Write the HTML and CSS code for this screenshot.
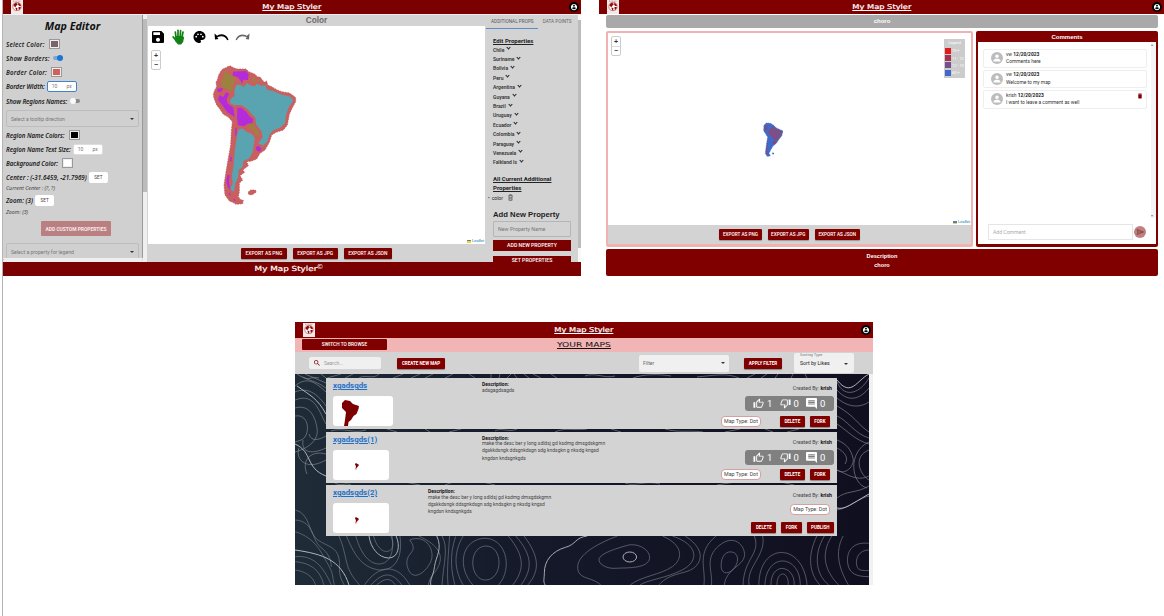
FILE: index.html
```
<!DOCTYPE html>
<html lang="en">
<head>
<meta charset="utf-8">
<title>My Map Styler</title>
<link rel="stylesheet" href="styles.css">
</head>
<body>
<svg class="defs" width="0" height="0">
  <symbol id="account" viewBox="0 0 24 24"><circle cx="12" cy="12" r="12" fill="#000"/><path fill="#fff" transform="translate(3 3) scale(.75)" d="M12 2C6.480 2 2 6.480 2 12s4.480 10 10 10 10-4.480 10-10S17.520 2 12 2zm0 3c1.660 0 3 1.340 3 3s-1.340 3-3 3-3-1.340-3-3 1.340-3 3-3zm0 14.200c-2.500 0-4.710-1.280-6-3.220.030-1.990 4-3.080 6-3.080 1.990 0 5.970 1.090 6 3.080-1.290 1.940-3.500 3.220-6 3.220z"/></symbol>
  <symbol id="logo" viewBox="0 0 12 14"><rect width="12" height="14" fill="#f3e9e9"/><path d="M2 1.200h8" stroke="#b77" stroke-width=".8" stroke-dasharray="1 .6"/><circle cx="6" cy="6.500" r="4.100" fill="#fff" stroke="#a33" stroke-width=".6"/><path fill="#8c0a0a" d="M2.300 5l2-2 2 .2.300 1.500-1.400 1-.4 1.200-1.500-.5zM4.300 7.500l2 .5.200 1.300-1.200 1.200zM7.200 2.700l2 1.200.8 2-1.600.2-1.200-1zM7.400 7.100l2.400-.2-.6 2.200-1.400.8z"/></symbol>
  <symbol id="save" viewBox="3 3 18 18"><path d="M17 3H5c-1.110 0-2 .9-2 2v14c0 1.100.890 2 2 2h14c1.100 0 2-.9 2-2V7l-4-4zm-5 16c-1.660 0-3-1.340-3-3s1.340-3 3-3 3 1.340 3 3-1.340 3-3 3zm3-10H5V5h10v4z"/></symbol>
  <symbol id="palette" viewBox="2 2 20 20"><path d="M12 2C6.490 2 2 6.490 2 12s4.490 10 10 10c1.380 0 2.500-1.120 2.500-2.500 0-.61-.23-1.200-.64-1.670-.08-.1-.13-.21-.13-.33 0-.28.220-.5.500-.5H16c3.310 0 6-2.690 6-6 0-4.960-4.490-9-10-9zm5.500 11c-.83 0-1.500-.67-1.500-1.500s.670-1.500 1.500-1.500 1.500.670 1.500 1.500-.67 1.500-1.500 1.500zm-3-4c-.83 0-1.500-.67-1.500-1.500S13.670 6 14.500 6s1.500.670 1.500 1.500S15.330 9 14.500 9zM5 11.500c0-.83.670-1.500 1.500-1.500s1.500.670 1.500 1.500S7.330 13 6.500 13 5 12.330 5 11.500zm6-4c0 .83-.67 1.500-1.500 1.500S8 8.330 8 7.500 8.670 6 9.500 6s1.500.670 1.500 1.500z"/></symbol>
  <symbol id="undo" viewBox="1 7 23 10"><path d="M12.500 8c-2.650 0-5.050.990-6.900 2.600L2 7v9h9l-3.620-3.620c1.390-1.160 3.160-1.880 5.120-1.880 3.540 0 6.550 2.310 7.600 5.500l2.370-.78C21.080 11.030 17.150 8 12.500 8z"/></symbol>
  <symbol id="up" viewBox="0 0 24 24"><path d="M9 21h9c.83 0 1.540-.5 1.840-1.220l3.020-7.050c.090-.23.140-.47.140-.73v-2c0-1.100-.9-2-2-2h-6.310l.95-4.570.03-.32c0-.41-.17-.79-.44-1.060L14.170 1 7.580 7.590C7.220 7.950 7 8.450 7 9v10c0 1.100.9 2 2 2zM9 9l4.340-4.340L12 10h9v2l-3 7H9V9zM1 9h4v12H1z"/></symbol>
  <symbol id="comment" viewBox="2 2 20 20"><path d="M22 4c0-1.100-.9-2-2-2H4c-1.100 0-2 .9-2 2v12c0 1.100.900 2 2 2h14l4 4V4zM18 14H6v-2h12v2zm0-3H6V9h12v2zm0-3H6V6h12v2z"/></symbol>
  <symbol id="search" viewBox="3 3 18 18"><path d="M15.500 14h-.79l-.28-.27C15.410 12.590 16 11.110 16 9.500 16 5.910 13.090 3 9.500 3S3 5.910 3 9.500 5.910 16 9.500 16c1.610 0 3.090-.59 4.230-1.570l.27.280v.79l5 4.990L20.490 19l-4.990-5zm-6 0C7.010 14 5 11.990 5 9.500S7.010 5 9.500 5 14 7.010 14 9.500 11.990 14 9.500 14z"/></symbol>
  <symbol id="bin" viewBox="5 3 14 18"><path d="M6 19c0 1.100.9 2 2 2h8c1.100 0 2-.9 2-2V7H6v12zM19 4h-3.500l-1-1h-5l-1 1H5v2h14V4z"/></symbol>
  <symbol id="binline" viewBox="4 2 16 20"><path d="M5 6h14M9 5V3h6v2M7 7v14h10V7M10 10v8M14 10v8" fill="none" stroke="#333" stroke-width="1.800"/></symbol>
  <symbol id="person" viewBox="0 0 24 24"><circle cx="12" cy="12" r="12" fill="#bdbdbd"/><path fill="#fff" d="M12 12c1.930 0 3.500-1.570 3.500-3.500S13.930 5 12 5 8.500 6.570 8.500 8.500 10.070 12 12 12zm0 1.700c-2.400 0-7 1.200-7 3.500V19h14v-1.800c0-2.300-4.600-3.500-7-3.500z"/></symbol>
  <symbol id="america" viewBox="38 30 255 425"><path d="M62 50 78 38 92 33 105 40 138 42 146 50 165 58 180 66 193 82 203 90 245 110 268 114 285 125 288 140 266 180 262 210 250 225 228 232 215 240 208 262 195 285 180 295 165 312 140 320 145 332 128 345 120 362 128 375 118 385 115 410 117 430 130 440 108 448 88 438 75 420 72 390 78 350 92 270 97 200 70 175 42 130 40 112 50 95 52 75Z"/></symbol>
</svg>

<main class="canvas">
  <div class="rule"></div>

  <section class="win editor">
    <header class="bar"><svg class="logo"><use href="#logo"/></svg><a class="brand">My Map Styler</a><svg class="acct"><use href="#account"/></svg></header>
    <div class="ed-body">
      <div class="side-wrap">
        <aside class="side">
          <h1>Map Editor</h1>
          <div class="r h14"><b class="s1">Select Color:</b><i class="sw" style="background:#7a6468"></i></div>
          <div class="r h14"><b class="s1">Show Borders:</b><i class="tog on"></i></div>
          <div class="r h14"><b class="s1">Border Color:</b><i class="sw" style="background:#d0605f"></i></div>
          <div class="r h14"><b>Border Width:</b><span class="num focus"><em>10</em><em>px</em></span></div>
          <div class="r h16"><b>Show Regions Names:</b><i class="tog"></i></div>
          <div class="select"><span>Select a tooltip direction</span><i class="caret"></i></div>
          <div class="r h14"><b>Region Name Colors:</b><i class="sw" style="background:#000"></i></div>
          <div class="r h14"><b>Region Name Text Size:</b><span class="num"><em>10</em><em>px</em></span></div>
          <div class="r h14"><b>Background Color:</b><i class="sw" style="background:#fff"></i></div>
          <div class="r h14"><b class="wide">Center : (-31.6459, -21.7969)</b><span class="set">SET</span></div>
          <div class="r h8"><span>Current Center : (?, ?)</span></div>
          <div class="r h16"><b class="wide">Zoom: (3)</b><span class="set">SET</span></div>
          <div class="r h8"><span>Zoom: (3)</span></div>
          <div class="custom">ADD CUSTOM PROPERTIES</div>
          <div class="select cut"><span>Select a property for legend</span><i class="caret"></i></div>
        </aside>
        <div class="hscroll"><span>‹</span><span>›</span></div>
      </div>
      <div class="vscroll"><i></i></div>
      <div class="mid">
        <div class="maptitle">Color</div>
        <div class="mapbox">
          <div class="tools">
            <svg width="12" height="12"><use href="#save"/></svg>
            <svg width="14" height="16" viewBox="0 0 14 16"><g stroke="#128012" stroke-linecap="round" fill="none" stroke-width="1.700"><path d="M4 8 3.300 3M6 7V1.300M8.200 7l.4-5.500M10 8l1-5"/><path d="M1.300 8 4.500 12" stroke-width="1.900"/></g><path fill="#128012" d="M3.200 7h7.700l1.200 1.500-1 4.500-2 2.600H6L3 12z"/></svg>
            <svg width="13" height="12"><use href="#palette"/></svg>
            <svg width="15" height="10" viewBox="0 0 15 10"><path d="M.5 1.500 1 7.500 6.500 6.800ZM3 5.500C7 1.500 12 3 13.800 8" fill="#000"/><path d="M2.500 5C7 1.500 12 3 13.800 8" fill="none" stroke="#000" stroke-width="1.500"/><path d="M3.500 5.500C7 3 11.500 4 13 8L9 9.500 5 8Z" fill="#fff"/></svg>
            <svg class="redo" width="15" height="10" viewBox="0 0 15 10"><path d="M.5 1.500 1 7.500 6.500 6.800ZM3 5.500C7 1.500 12 3 13.800 8"/><path d="M2.500 5C7 1.500 12 3 13.800 8" fill="none" stroke="#000" stroke-width="1.300"/><path d="M3.500 5.500C7 3 11.500 4 13 8L9 9.500 5 8Z" fill="#fff"/></svg>
          </div>
          <div class="zoomctl"><span>+</span><span>−</span></div>
          <svg class="samap" width="110" height="160" viewBox="0 0 330 480">
            <path fill="#c9605f" stroke="#b94e55" stroke-width="2" stroke-dasharray="5 3" d="M62 50 68 42 78 38 85 34 92 33 98 37 105 40 112 42 138 42 146 50 158 55 165 58 173 66 180 66 187 75 193 82 200 78 203 90 215 95 230 104 245 110 268 114 280 122 287 128 287 140 277 158 268 178 262 210 250 225 228 232 215 240 208 262 195 285 180 295 170 312 155 318 140 320 145 332 128 345 134 352 120 362 128 375 118 385 118 410 115 425 122 434 130 436 128 446 108 448 98 442 88 438 75 420 72 390 78 350 85 310 92 270 94 230 97 200 85 186 70 178 60 163 50 150 42 130 40 118 44 106 50 95 48 82 52 75 56 60Z"/>
            <path fill="#9d823f" d="M70 52 82 46 80 57 92 60 106 68 103 84 98 95 96 110 82 103 74 98 62 95 65 80 70 70Z"/>
            <path fill="#b42bdc" d="M99 50 138 48 146 58 144 75 130 74 126 86 120 75 112 66 98 62ZM52 101 70 99 64 110 53 111ZM58 120 70 126 78 112 88 116 80 132 82 145 100 158 104 186 82 172 68 152 54 134ZM112 158 125 158 140 172 148 184 159 192 158 205 143 206 132 214 114 211 111 190ZM168 276 176 272 184 282 180 290 169 286ZM106 218h4v18l-5 10ZM91 305h4v14h-5ZM82 360h7l-2 20 4 25-8-10-4-15ZM88 412l5 12-7-6ZM102 430l6 9-8-4Z"/>
            <path fill="#9d823f" d="M155 70 164 67 166 82 157 79ZM172 77l10-4-5 10ZM146 208 160 205 166 220 178 230 176 243 166 240 160 226 148 220Z"/>
            <path fill="#5aa4b2" d="M90 136 98 126 104 124 103 108 109 90 122 89 130 97 142 84 150 91 165 94 170 86 185 92 196 91 202 104 222 109 244 119 268 124 280 135 265 160 258 180 255 205 240 218 220 226 208 240 203 258 190 272 175 265 188 246 184 228 168 208 166 188 150 172 138 158 122 150 105 151 92 146ZM114 226 126 220 140 230 155 237 165 250 162 265 158 292 148 310 130 318 128 335 116 345 115 365 106 385 102 410 94 406 91 398 98 388 96 360 101 330 104 290 110 250Z"/>
            <path fill="#c9605f" stroke="#b94e55" stroke-width="2" stroke-dasharray="5 3" d="M144 412 152 405 166 405 169 411 157 419 147 419Z"/>
          </svg>
          <div class="leaflet"><i></i>Leaflet</div>
        </div>
        <div class="exports"><span>EXPORT AS PNG</span><span>EXPORT AS JPG</span><span>EXPORT AS JSON</span></div>
      </div>
      <div class="props">
        <div class="tabs"><span class="act">ADDITIONAL PROPS</span><span>DATA POINTS</span></div>
        <h2>Edit Properties</h2>
        <ul class="countries">
          <li>Chile<i></i></li><li>Suriname<i></i></li><li>Bolivia<i></i></li><li>Peru<i></i></li><li>Argentina<i></i></li><li>Guyana<i></i></li><li>Brazil<i></i></li><li>Uruguay<i></i></li><li>Ecuador<i></i></li><li>Colombia<i></i></li><li>Paraguay<i></i></li><li>Venezuela<i></i></li><li>Falkland Is<i></i></li>
        </ul>
        <h2 class="all">All Current Additional Properties</h2>
        <div class="colorrow"><span>•</span>color<svg width="5" height="7"><use href="#binline"/></svg></div>
        <h3>Add New Property</h3>
        <div class="field">New Property Name</div>
        <div class="pbtn">ADD NEW PROPERTY</div>
        <div class="pbtn last">SET PROPERTIES</div>
      </div>
      <div class="pscroll"></div>
    </div>
    <footer><span>My Map Styler</span><sup>©</sup></footer>
  </section>

  <section class="win viewer">
    <header class="bar"><svg class="logo"><use href="#logo"/></svg><a class="brand">My Map Styler</a><svg class="acct"><use href="#account"/></svg></header>
    <div class="v-body">
      <div class="v-title">choro</div>
      <div class="v-row">
        <div class="v-map">
          <div class="v-canvas">
            <div class="zoomctl"><span>+</span><span>−</span></div>
            <svg class="smallmap" width="20" height="36" viewBox="0 0 60 108"><path fill="#4169c8" stroke="#3d62bd" stroke-width="2" stroke-dasharray="3 2" d="M3 10 10 3 22 4 32 10 40 18 60 27 56 42 48 52 40 64 30 72 24 82 18 94 22 102 12 103 7 94 10 70 14 45 2 26Z"/><path fill="#7c4f86" d="M20 22 30 12 40 20 58 28 54 42 45 52 36 60 27 44 14 32ZM5 13l8-2 2 10-8 6ZM12 72l3-20v26Z"/><path fill="#7c4f86" d="m9 80 5 2-1 16-4-4Z"/><path fill="#d22" d="M32 59l6 2-3 5-4-3Z"/><path fill="#4169c8" d="M27 92h6v5h-5Z"/></svg>
            <div class="legend"><p>Legend</p><div><i style="background:#e01b1b"></i>10 +</div><div><i style="background:#a8304f"></i>11 - 12</div><div><i style="background:#764f8c"></i>12 - 13</div><div><i style="background:#4268c8"></i>60 +</div></div>
            <div class="leaflet"><i></i>Leaflet</div>
          </div>
          <div class="exports"><span>EXPORT AS PNG</span><span>EXPORT AS JPG</span><span>EXPORT AS JSON</span></div>
        </div>
        <div class="comments">
          <h4>Comments</h4>
          <div class="c-in">
            <div class="c-main">
              <div class="c"><svg width="12" height="12"><use href="#person"/></svg><p>vw <b>12/20/2023</b><br>Comments here</p></div>
              <div class="c"><svg width="12" height="12"><use href="#person"/></svg><p>vw <b>12/20/2023</b><br>Welcome to my map</p></div>
              <div class="c"><svg width="12" height="12"><use href="#person"/></svg><p>krish <b>12/20/2023</b><br>I want to leave a comment as well</p><svg class="del" width="4" height="6"><use href="#bin"/></svg></div>
            </div>
            <div class="c-scroll"><span>▴</span><span>▾</span></div>
            <div class="add"><span>Add Comment</span><svg width="12" height="12" viewBox="0 0 24 24"><circle cx="12" cy="12" r="12" fill="#c08080"/><path fill="none" stroke="#86464a" stroke-width="1.800" d="M6 7 19 12 6 17 8 12ZM8 12h10"/></svg></div>
          </div>
        </div>
      </div>
      <div class="v-desc">Description<br>choro</div>
    </div>
  </section>

  <section class="win browse">
    <header class="bar"><svg class="logo"><use href="#logo"/></svg><a class="brand">My Map Styler</a><svg class="acct"><use href="#account"/></svg></header>
    <div class="pink"><span class="switch">SWITCH TO BROWSE</span><span class="yours">YOUR MAPS</span></div>
    <div class="filters">
      <div class="search"><svg width="6" height="6"><use href="#search"/></svg>Search...</div>
      <div class="rbtn create">CREATE NEW MAP</div>
      <div class="filter">Filter<i class="caret"></i></div>
      <div class="rbtn apply">APPLY FILTER</div>
      <div class="sort"><small>Sorting Type</small><span>Sort by Likes</span><i class="caret"></i></div>
    </div>
    <div class="topo">
      <svg class="lines" width="574" height="211" viewBox="0 0 574 211">
        <defs><linearGradient id="night"><stop offset="0" stop-color="#1f2c38"/><stop offset=".4" stop-color="#151929"/><stop offset="1" stop-color="#100f20"/></linearGradient></defs>
        <rect width="574" height="211" fill="url(#night)"/>
        <g fill="none" stroke="#8d929b" stroke-width=".6">
          <path d="M0 12C12 2 20 8 31 18M0 18c14-6 24 4 31 14M0 26c20-8 24 12 31 24M0 34c14-4 20 8 22 20s-8 20-22 24M0 42c10-2 14 8 12 16s-6 8-12 10M2 0c8 6 18 6 29 14M10 0l21 9M26 0l5 4M4 74c-4 10 6 24 27 12M8 66c-2 14 10 14 23 8M14 60c2 8 10 6 17 2M12 100c-6-14 4-24 19-20"/>
          <path d="M8 3c6 4 8-1 16 1M32 4l14-4M50 4l8-4M64 4c6-4 14 2 20-4M98 4l10-4M116 4l9-4M130 4l8-4M150 4l8-4M180 4l-6-4M196 4V0M204 4l1-4M212 4l4-4M222 4l-3-4M234 4l-5-4M246 4l-8-4M262 4l-6-4M290 2c10-4 20 3 30 0M338 4c10-4 26-4 38-2M402 3c20-2 30-4 42 1M452 4l8-4M466 4l6-4M480 4l3-4M496 4l2-4M512 4l-2-4"/>
          <path d="M36 57c12-4 22 3 35-1M92 55l10 3M130 55l5 3M154 58l12-3M200 57c6-4 14 2 22-2M260 58c10-5 20-1 32-3M316 55l10 3M370 55c14 4 24 1 38 3M430 58l15-3M470 55l8 3M492 58l12-3M40 109c6 4 10-1 16 2M110 108l15 3M150 111l8-3M188 108l12 3M330 109c10 4 20-3 35 1M422 111l18-3M486 108l13 3"/>
          <path d="M542 8c8 18 24 10 32-4M542 16c12 14 24 8 32-2M542 24c14 12 26 8 32 4M542 32c18 10 20 18 32 26M542 42c10 4 18 18 32 22M542 50c12 8 18 16 32 20M542 66c10 4 14 10 16 18s-8 18-16 12M542 74c8 4 12 10 8 16M574 76c-16 6-10 24 0 30M574 68c-22 10-18 42-2 46M574 102c-12 6-22-2-32-6M574 112c-14 8-22 4-32 12M574 122c-10 2-20 12-32 14"/>
        </g>
        <g transform="translate(-5 56) scale(.3763 .3333)" fill="none" stroke="#7d838f" stroke-width="1.700">
          <path d="M14 240c40 10 34 70 60 90s50 20 56 55-6 40 14 80M14 270c50 4 44 60 66 80s28 35 30 60M14 305c56 20 70 66 86 96s12 40 18 64M14 380c50-5 74 30 96 85M14 395c40 4 66 24 76 70M14 420c24 4 46 16 54 45"/>
          <path d="M150 318c18 48 38 96 88 102 44 2 62-42 54-102M175 318c10 42 30 82 60 84 34 0 42-42 36-84M130 318c26 68 10 92 55 147M215 465c30-36 54-44 82 0M198 465c36-60 86-68 120 0M230 465c24-22 36-22 50 0"/>
          <path stroke-width="2.600" stroke="#b3b6bc" d="M210 318c4 36 26 66 52 66s32-36 20-66"/>
          <path d="M222 318c6 28 22 50 38 46s16-26 8-46"/>
          <path d="M318 330c44-20 72 34 54 70s-50 54-60 10 34-40 6-80M342 318c54 28 70 60 48 100-8 14-20 24-22 47M404 318c18 38 4 78 0 147M424 318c-2 44-8 104-4 147M440 320c-18 58-10 108-2 145M460 318c-28 54-22 104 0 147M600 318c46 60 44 100 14 147M580 318c44 60 44 100 12 147M622 318c42 64 42 104 10 147M520 348c48 0 46 98 2 102s-52-98-2-102ZM512 325c62-6 82 90 42 140M512 325c-60 10-66 90-26 140"/>
          <path stroke-width="2.600" stroke="#b3b6bc" d="M790 318c-32 4-30 26-58 34-36 12-56 40-56 76 0 18-4 25 2 37M390 318c16 38-2 60-6 92s-12 34-10 55"/>
          <path d="M900 345c38-6 66 28 52 50s-66 18-88 20-48-14-42-30 46-30 78-40ZM870 318c-60 26-116 62-104 106 8 24 38 18 60 41M990 318c54 26 56 68 26 92s-86 30-112 55M1016 318c70 26 72 76 26 102s-88 28-112 45M1050 318c64 46 42 96 0 108s-54 20-70 39"/>
          <ellipse cx="903" cy="381" rx="18" ry="15" stroke="#b3b6bc" stroke-width="2.600"/>
          <path d="M1120 465c4-42-20-80 20-118s70 0 68 30-50 40-54 88M1166 366c24-4 30 24 16 46s-34 22-36 0 6-42 20-46ZM1100 465c6-50-22-96 32-147M1234 318c18 54-28 66-30 147M1256 318c10 60-44 90-36 147M1278 465c0-72 64-60 62 0M1262 465c4-100 94-92 94 0M1246 465c0-130 118-130 128 0M1294 465c0-46 32-42 30 0"/>
          <path d="M1538 340c-44-6-60 26-56 60s28 40 56 40M1538 360c-26 0-36 26-32 46s18 14 32 16M1470 318c-24 50-10 100 14 147M1440 318c-34 60-14 110 18 147M1420 318c-32 60-20 120 12 147M1400 318c-26 60-20 112 8 147"/>
        </g>
        <path d="M0 70c18 8 10 24 31 32M0 176c28 4 46 10 54 35M2 12c14 10 20 12 29 28M542 6c14 18 20 0 32-6M574 120c-18 10-24 16-32 14" fill="none" stroke="#b3b6bc" stroke-width="1"/>
      </svg>
      <div class="cards">
        <article class="card">
          <div class="cl"><a>xgadsgds</a><div class="thumb big"><svg width="20" height="30" viewBox="0 0 20 30"><path fill="#7c0000" d="M1 3 4 0 9 1 12 4 18 6 17.500 9 15.500 14 12.500 16 10 20 7.500 22 7 26 3 26 4 20 5 12 1 8Z"/></svg></div></div>
          <div class="cd"><b>Description:</b><p>adsgagdsagds</p></div>
          <div class="cr"><p>Created By: <b>krish</b></p>
            <div class="stats"><svg><use href="#up"/></svg><span>1</span><svg class="dn"><use href="#up"/></svg><span>0</span><svg><use href="#comment"/></svg><span>0</span></div>
            <div class="acts"><span class="pill">Map Type: Dot</span><span class="rbtn">DELETE</span><span class="rbtn">FORK</span></div></div>
        </article>
        <article class="card">
          <div class="cl"><a>xgadsgds(1)</a><div class="thumb"><svg width="4" height="7"><use href="#america" fill="#7c0000"/></svg></div></div>
          <div class="cd"><b>Description:</b><p>make the desc ber y long sdldsj gd ksdmg dmsgdskgmn<br>dgskkdsngk ddsgnkdsgn sdg kndsgkn g nksdg kngsd<br>kngdsn kndsgnkgds</p></div>
          <div class="cr"><p>Created By: <b>krish</b></p>
            <div class="stats"><svg><use href="#up"/></svg><span>1</span><svg class="dn"><use href="#up"/></svg><span>0</span><svg><use href="#comment"/></svg><span>0</span></div>
            <div class="acts"><span class="pill">Map Type: Dot</span><span class="rbtn">DELETE</span><span class="rbtn">FORK</span></div></div>
        </article>
        <article class="card draft">
          <div class="cl"><a>xgadsgds(2)</a><div class="thumb"><svg width="4" height="7"><use href="#america" fill="#7c0000"/></svg></div></div>
          <div class="cd"><b>Description:</b><p>make the desc ber y long sdldsj gd ksdmg dmsgdskgmn<br>dgskkdsngk ddsgnkdsgn sdg kndsgkn g nksdg kngsd<br>kngdsn kndsgnkgds</p></div>
          <div class="cr"><p>Created By: <b>krish</b></p><span class="pill">Map Type: Dot</span>
            <div class="acts"><span class="rbtn">DELETE</span><span class="rbtn">FORK</span><span class="rbtn">PUBLISH</span></div></div>
        </article>
      </div>
    </div>
  </section>
</main>
</body>
</html>
```
FILE: styles.css
```
* { box-sizing: border-box; }
body { margin: 0; background: #fff; font-family: Roboto, "Liberation Sans", sans-serif; font-size: 5px; color: #222; }
h1, h2, h3, h4, p, ul { margin: 0; padding: 0; }
ul { list-style: none; }
i, em { font-style: normal; }
svg { display: block; flex: none; }
.defs { position: absolute; }
.canvas { position: relative; width: 1164px; height: 616px; overflow: hidden; }
.rule { position: absolute; left: 2px; top: 0; width: 1px; height: 616px; background: #b4b4b4; }
.win { position: absolute; display: flex; flex-direction: column; overflow: hidden; }

/* shared header */
.bar { flex: none; display: grid; grid-template-columns: 60px 1fr 60px; align-items: center; height: 14px; background: #7b0000; }
.logo { width: 12px; height: 14px; margin-left: 8px; }
.brand { justify-self: center; color: #fff; font: 500 6.700px/10px "DejaVu Sans", sans-serif; text-decoration: underline; white-space: nowrap; transform: scaleX(1.24); -webkit-text-stroke: .2px #fff; }
.acct { width: 10px; height: 10px; justify-self: end; margin: 0 2px 1px 0; }
.caret { width: 0; height: 0; border: 2px solid transparent; border-top-color: #333; border-bottom: 0; }

/* editor window */
.editor { left: 3px; top: 0; width: 578px; height: 276px; }
.ed-body { display: flex; height: 248px; border-top: 1px solid #eee; background: #d3d3d3; }
.side-wrap { width: 140px; height: 247px; }
.side { height: 243px; padding: 0 3px; overflow: hidden; background: #d0d0d0; border-right: 1px solid #999; font-family: "Noto Sans", sans-serif; }
.side h1 { height: 22px; font: italic 700 10.700px/23px "Noto Sans", sans-serif; text-align: center; color: #111; }
.r { display: flex; align-items: center; gap: 4px; font-size: 5.300px; font-style: italic; white-space: nowrap; color: #444; }
.r b { font-size: 6.200px; font-weight: 600; color: #1c1c1c; letter-spacing: -.06px; }
.r b.s1 { letter-spacing: .25px; }
.r b.wide { letter-spacing: .05px; }
.h14 { height: 14px; } .h16 { height: 16px; } .h8 { height: 8px; }
.sw { width: 9px; height: 8px; margin-left: 1px; border: 1px solid #eee; outline: 1px solid #999; outline-offset: -.5px; }
.tog { display: flex; width: 10px; height: 4px; margin-left: -1px; border-radius: 2px; background: #888; align-items: center; }
.tog::before { content: ""; width: 6px; height: 6px; border-radius: 50%; background: #fafafa; }
.tog.on { background: #7aa6da; justify-content: flex-end; }
.tog.on::before { background: #1976d2; }
.num { display: flex; justify-content: space-between; align-items: center; width: 30px; height: 11px; padding: 0 4px; margin-left: -2px; background: #fff; border: 1px solid #ddd; border-radius: 2px; font: 5px Roboto, sans-serif; color: #777; }
.num.focus { border-color: #3f83cf; }
.set { display: grid; place-items: center; width: 19px; height: 11px; margin-left: -2px; background: #fff; border-radius: 2px; font: 4.600px Roboto, sans-serif; color: #444; }
.select { display: flex; justify-content: space-between; align-items: center; height: 17px; margin: 1px 0; padding: 0 4px; border: 1px solid #bdbdbd; border-radius: 2px; font: 5px Roboto, sans-serif; color: #777; }
.select.cut { font-size: 5.150px; }
.custom { display: grid; place-items: center; width: 70px; height: 15px; margin: 5px auto 7px 35px; background: #b97f81; border-radius: 1px; color: #f7eaea; font: 700 4.900px Roboto, sans-serif; }
.hscroll { display: flex; justify-content: space-between; height: 4px; background: #eee; font-size: 4px; line-height: 4px; color: #777; }
.vscroll { width: 4px; background: #efefef; }
.vscroll i { display: block; width: 4px; height: 173px; margin-top: 4px; background: #bbb; }
.mid { display: flex; flex-direction: column; width: 339px; }
.maptitle { height: 11px; text-align: center; font: 700 8.200px/11px "Liberation Sans", sans-serif; color: #6b6b6b; }
.mapbox { position: relative; height: 218px; margin-left: 1px; margin-right: 1px; background: #fff; }
.tools { display: flex; align-items: center; gap: 8px; height: 16px; padding: 0 4px; margin-top: 3px; }
.tools svg:nth-child(3) { margin-left: -1px; }
.redo { transform: scaleX(-1); opacity: .6; margin-left: -2px; }
.zoomctl { display: grid; grid-template-rows: 9px 9px; width: 10px; height: 20px; background: #fff; border: 1px solid #ccc; border-radius: 2px; text-align: center; font: 700 7px/9px "Liberation Sans", sans-serif; color: #333; }
.zoomctl span + span { border-top: 1px solid #ddd; line-height: 8px; }
.mapbox .zoomctl { margin: 5px 0 0 3px; }
.samap { position: absolute; left: 52px; top: 29px; }
.leaflet { position: absolute; right: 1px; bottom: 0; display: flex; align-items: center; gap: 1px; font: 4px/6px "Liberation Sans", sans-serif; color: #0078a8; }
.leaflet i { width: 4px; height: 3px; background: linear-gradient(#4c7be1 50%, #ffd500 50%); }
.exports { display: flex; gap: 6px; flex: 1; align-items: center; justify-content: center; background: #d3d3d3; }
.exports span { display: grid; place-items: center; height: 11px; padding: 0 4.500px; background: #7b0000; border-radius: 1px; color: #fff; font: 500 4.900px Roboto, sans-serif; white-space: nowrap; box-shadow: 0 1px 1px #999; }
.props { width: 92px; padding-left: 7px; overflow: hidden; }
.tabs { display: flex; align-items: center; height: 14px; margin-left: -7px; white-space: nowrap; font-size: 4.700px; color: #666; }
.tabs span { height: 14px; padding: 0 5px 0 5px; line-height: 13px; }
.tabs .act { border-bottom: 1px solid #5c8fca; color: #555; padding-right: 4px; }
.props h2 { margin-top: 7px; font: 700 6.050px/9px Roboto, sans-serif; text-decoration: underline; }
.countries li { display: flex; align-items: center; gap: 2px; height: 9.400px; font-size: 5px; font-weight: 600; color: #333; }
.countries i { width: 3px; height: 3px; margin: -4px 1px 0; border: solid #222; border-width: 0 1px 1px 0; transform: rotate(45deg); }
.props h2.all { width: 68px; margin-top: 7px; }
.colorrow { display: flex; align-items: center; gap: 2px; height: 11px; margin: 0 0 0 -5px; font-size: 5px; }
.colorrow svg { margin-left: 3px; }
.props h3 { margin-top: 7px; font: 700 7.700px/10px "Liberation Sans", sans-serif; white-space: nowrap; }
.field { width: 78px; height: 16px; margin-top: 1px; padding-left: 4px; border: 1px solid #b5b5b5; border-radius: 1px; font-size: 5.300px; line-height: 14px; color: #777; }
.pbtn { width: 78px; height: 11px; margin: 3px 0 5px; background: #7b0000; color: #fff; text-align: center; font: 500 5.200px/11px Roboto, sans-serif; }
.pbtn.last { line-height: 9px; }
.pscroll { width: 3px; background: #bbb; border-top: 5px solid #f8f8f8; border-bottom: 14px solid #f8f8f8; }
.editor footer { height: 14px; background: #7b0000; color: #fff; text-align: center; font: 500 7px/15px "DejaVu Sans", sans-serif; white-space: nowrap; }
.editor footer span { display: inline-block; margin-right: 6px; transform: scaleX(1.26); -webkit-text-stroke: .2px #fff; }
.editor footer sup { font-size: 7px; line-height: 0; vertical-align: 2px; }

/* map viewer window */
.viewer { left: 599px; top: 0; width: 565px; height: 277px; }
.viewer .bar { background: #800000; }
.viewer .exports span, .browse .rbtn { background: #800000; }
.viewer .exports span { padding: 0 3.500px; font-size: 4.700px; }
.v-body { display: flex; flex-direction: column; gap: 3px; padding: 1px 6px 0 7px; }
.v-title { height: 13px; background: #a9a9a9; border-radius: 2px; color: #fff; text-align: center; font: 700 6px/13px "Liberation Sans", sans-serif; }
.v-row { display: flex; gap: 3px; height: 216px; }
.v-map { display: flex; flex-direction: column; width: 367px; border: solid #f2b2b2; border-width: 2px 2px 3px; border-radius: 2px; }
.v-canvas { position: relative; height: 192px; padding: 3px; background: #fff; }
.v-canvas .zoomctl { margin: 0; }
.smallmap { position: absolute; left: 155px; top: 89px; }
.legend { position: absolute; right: 6px; top: 6px; width: 21px; height: 39px; padding: 1px; background: #ccc; color: #fff; font-size: 3.900px; }
.legend p { height: 7px; line-height: 6px; text-align: center; }
.legend div { display: flex; align-items: center; gap: 1px; height: 7.400px; white-space: nowrap; }
.legend i { flex: none; width: 6px; height: 6px; }
.comments { flex: 1; padding: 0 2px 3px 2px; background: #800000; border-radius: 2px; }
.comments h4 { height: 11px; color: #fff; text-align: center; font: 700 6px/13px "Liberation Sans", sans-serif; }
.c-in { display: grid; grid-template: 176px 1fr / 1fr 5px; height: 202px; background: #fff; }
.c-main { padding: 7px 4px 0 5px; }
.c { display: flex; align-items: center; gap: 3px; height: 18.500px; margin-bottom: 2px; padding: 0 4px 0 7px; border: 1px solid #eee; border-radius: 2px; }
.c p { flex: 1; font-size: 4.900px; line-height: 7.500px; color: #333; }
.c p b { color: #222; }
.del { fill: #800000; margin-top: -6px; }
.c-scroll { display: flex; flex-direction: column; justify-content: space-between; background: #f4f4f4; color: #888; font-size: 4px; }
.add { display: flex; align-items: center; gap: 1px; height: 16px; margin: 6px 0 0 10px; grid-column: 1 / 3; }
.add span { width: 145px; height: 16px; padding-left: 4px; border: 1px solid #e5e5e5; line-height: 15px; font-size: 5.100px; color: #aaa; }
.v-desc { height: 27px; margin-top: -1px; padding-top: 3px; background: #800000; border-radius: 2px; color: #fff; text-align: center; font: 700 5.600px/9px "Liberation Sans", sans-serif; }

/* own maps window */
.browse { left: 295px; top: 322px; width: 578px; height: 263px; }
.browse .bar { height: 16px; background: #800000; }
.pink { display: grid; grid-template-columns: 85px 1fr 85px; padding: 0 7px; height: 14px; background: #f2b5b5; }
.switch { height: 11px; margin-top: 1px; background: #800000; border-radius: 1px; color: #fff; text-align: center; font: 500 4.800px/11px Roboto, sans-serif; }
.yours { justify-self: center; text-decoration: underline; font: 6.800px/14px "DejaVu Sans", sans-serif; color: #111; transform: scaleX(1.35); }
.filters { display: flex; align-items: center; height: 22px; background: #d3d3d3; padding-left: 14px; }
.search { display: flex; align-items: center; gap: 4px; width: 72px; height: 12px; padding-left: 5px; background: #f0f0f0; border-radius: 2px; color: #999; fill: #800000; font-size: 5px; }
.rbtn { display: grid; place-items: center; height: 11px; padding: 0 4.500px; border-radius: 1px; color: #fff; font: 700 4.500px Roboto, sans-serif; white-space: nowrap; box-shadow: 0 1px 1px #888; }
.create { width: 48px; margin-left: 16px; }
.filter { display: flex; justify-content: space-between; align-items: center; width: 90px; height: 17px; margin-left: 194px; padding: 0 4px; background: #f0f0f0; border-radius: 2px; color: #666; }
.apply { width: 38px; margin-left: 15px; }
.sort { display: grid; grid-template: 4px 13px / 1fr auto; align-items: center; width: 60px; height: 20px; margin-left: 12px; padding: 0 6px; background: #f0f0f0; border-radius: 2px; font-size: 5.200px; white-space: nowrap; }
.sort small { grid-column: 1 / 3; font-size: 4px; line-height: 4px; color: #777; }
.sort span { line-height: 13px; }
.topo { position: relative; height: 211px; border-right: 4px solid #f1f1f1; }
.lines { position: absolute; left: 0; top: 0; }
.cards { position: relative; display: flex; flex-direction: column; gap: 2.500px; width: 511px; padding-top: 4px; margin-left: 31px; }
.card { display: grid; grid-template-columns: 149px 1fr 120px; height: 51px; padding: 0 3px 0 7px; background: #d3d3d3; }
.card.draft { grid-template-columns: 95px 1fr 120px; }
.cl a { display: block; height: 18px; font: 700 7.900px/15px Roboto, sans-serif; color: #1e70c9; text-decoration: underline; }
.thumb { display: grid; place-items: center; width: 56px; height: 30px; padding-top: 4px; background: #fff; border-radius: 3px; overflow: hidden; }
.thumb svg { margin-left: -9px; }
.thumb.big { place-items: start; width: 60px; padding: 4px 0 0 8px; }
.thumb.big svg { margin: 0; }
.cd { padding-top: 2px; line-height: 7.300px; font-size: 4.950px; white-space: nowrap; color: #444; }
.cd b { display: block; height: 6px; line-height: 8px; color: #111; }
.cd p { padding-top: .5px; }
.cr { display: flex; flex-direction: column; align-items: flex-end; font-size: 5.200px; }
.cr p { height: 18px; padding: 6px 2px 0 0; line-height: 8px; color: #444; }
.cr p b { color: #111; }
.stats { display: flex; align-items: center; width: 89px; height: 15px; padding-left: 8px; background: #808080; border-radius: 3px; color: #fff; fill: #fff; font-size: 9.500px; }
.stats svg { width: 11px; height: 11px; margin-right: 3px; }
.stats span { width: 12.500px; }
.stats .dn { transform: rotate(180deg); }
.acts { display: flex; align-items: center; gap: 5px; height: 12px; margin-top: 4px; padding-right: 4px; }
.pill { height: 11px; padding: 0 2px; background: #fff; border: 1px solid #d3a1a1; border-radius: 4px; font-size: 5.300px; line-height: 9px; white-space: nowrap; color: #444; }
.acts .pill { margin-right: 14px; }
.draft .pill { margin: 1px 4px 0 0; }
.draft .acts { margin-top: 6px; padding-right: 0; }
```
